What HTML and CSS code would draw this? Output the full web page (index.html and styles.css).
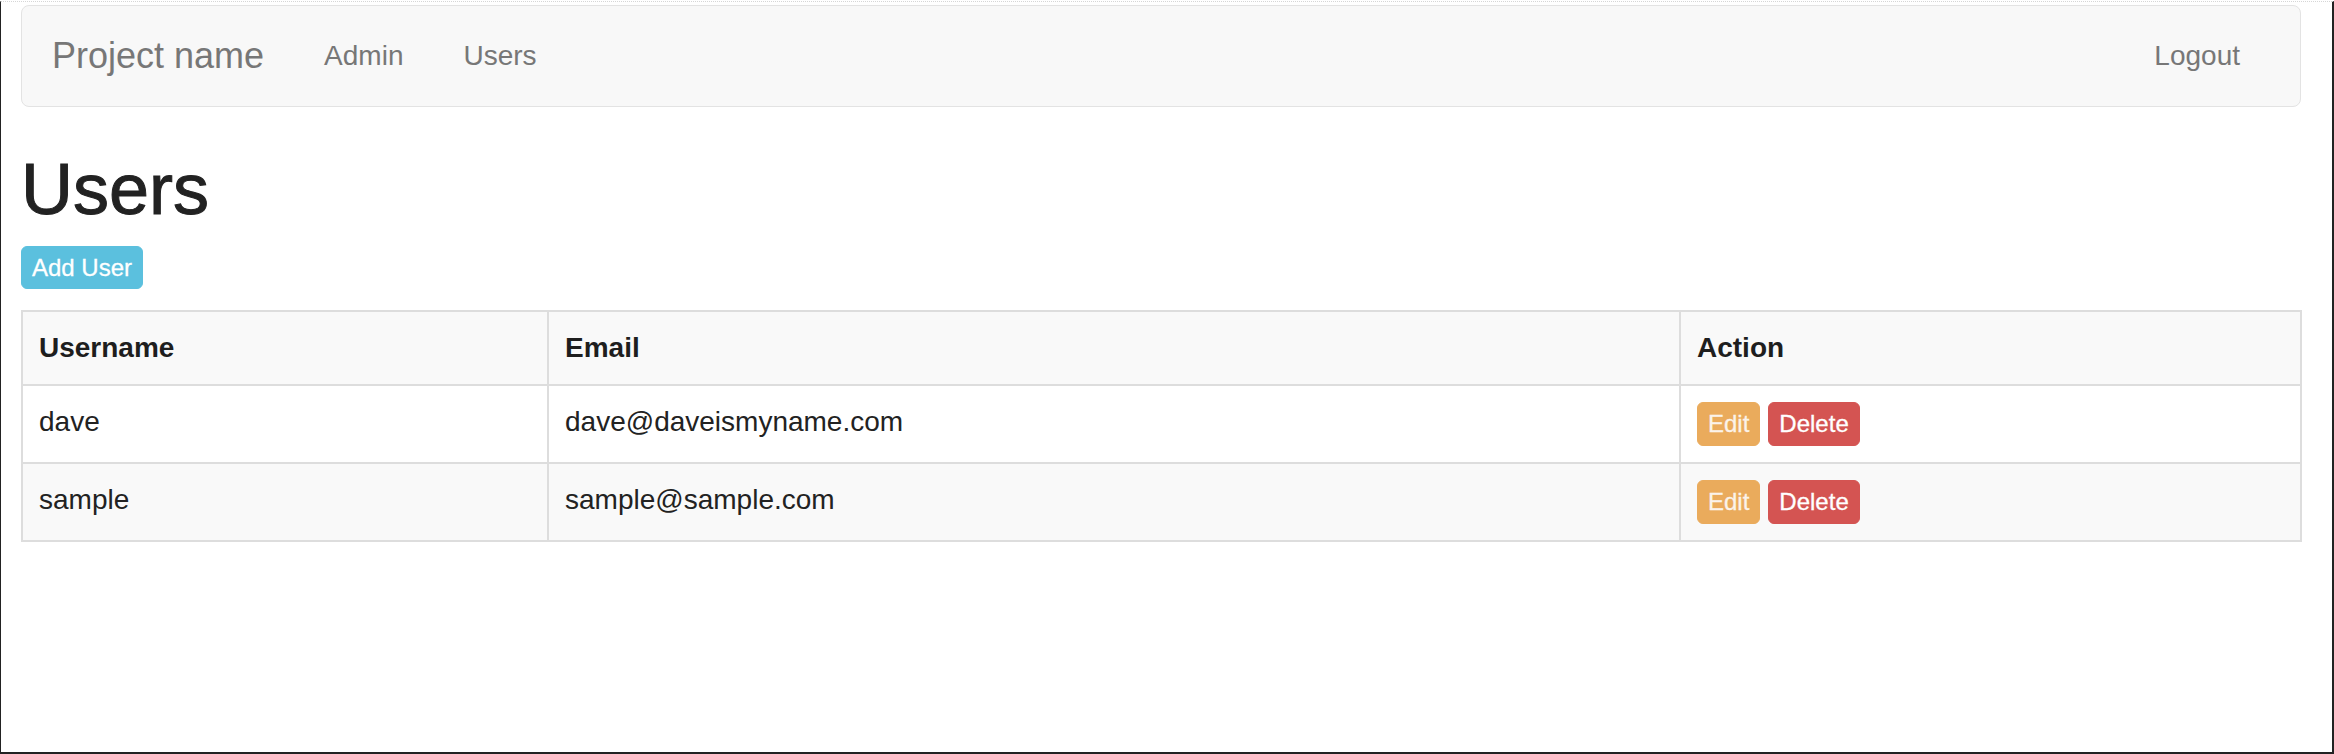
FILE: index.html
```html
<!DOCTYPE html>
<html lang="en">
<head>
<meta charset="utf-8">
<title>Users</title>
<link rel="stylesheet" href="styles.css">
</head>
<body>
<div class="frame">
  <nav class="navbar">
    <a class="brand" href="#">Project name</a>
    <ul class="nav">
      <li><a href="#">Admin</a></li>
      <li><a href="#">Users</a></li>
    </ul>
    <ul class="nav nav-right">
      <li><a href="#">Logout</a></li>
    </ul>
  </nav>

  <h1 class="title">Users</h1>
  <div class="toolbar">
    <a class="btn btn-info" href="#">Add User</a>
  </div>

  <table class="grid">
    <colgroup>
      <col class="col-user">
      <col class="col-email">
      <col class="col-action">
    </colgroup>
    <tbody>
      <tr class="head">
        <th><div class="cell cell-head">Username</div></th>
        <th><div class="cell cell-head">Email</div></th>
        <th><div class="cell cell-head">Action</div></th>
      </tr>
      <tr class="row-plain">
        <td><div class="cell">dave</div></td>
        <td><div class="cell">dave@daveismyname.com</div></td>
        <td><div class="cell actions"><a class="btn btn-warning" href="#">Edit</a><a class="btn btn-danger" href="#">Delete</a></div></td>
      </tr>
      <tr class="row-striped">
        <td><div class="cell">sample</div></td>
        <td><div class="cell">sample@sample.com</div></td>
        <td><div class="cell actions"><a class="btn btn-warning" href="#">Edit</a><a class="btn btn-danger" href="#">Delete</a></div></td>
      </tr>
    </tbody>
  </table>
</div>
</body>
</html>
```

FILE: styles.css
```css
html, body {
  margin: 0;
  padding: 0;
  background: #ffffff;
}

body {
  font-family: "Liberation Sans", Arial, Helvetica, sans-serif;
  color: #222222;
  font-size: 28px;
  line-height: 40px;
}

a {
  text-decoration: none;
}

.frame {
  box-sizing: border-box;
  margin-top: 1px;
  height: 753px;
  border-top: 1px dotted #d6d6d6;
  border-left: 1px solid #222222;
  border-right: 2px solid #222222;
  border-bottom: 2px solid #222222;
  padding: 3px 31px 0 20px;
}

/* Navbar */
.navbar {
  box-sizing: border-box;
  height: 102px;
  display: flex;
  align-items: flex-start;
  background: #f8f8f8;
  border: 1px solid #e3e3e3;
  border-radius: 8px;
  padding: 0 30px 0 0;
}

.brand {
  display: block;
  padding: 30px 30px;
  font-size: 36px;
  line-height: 40px;
  color: #777777;
}

.nav {
  display: flex;
  list-style: none;
  margin: 0;
  padding: 0;
}

.nav a {
  display: block;
  padding: 30px 30px;
  font-size: 28px;
  line-height: 40px;
  color: #777777;
}

.nav-right {
  margin-left: auto;
}

/* Heading */
.title {
  margin: 43px 0 0;
  font-size: 72px;
  line-height: 79px;
  font-weight: 500;
  color: #222222;
  -webkit-text-stroke: 1px #222222;
}

.toolbar {
  margin-top: 17px;
  display: flex;
}

/* Buttons */
.btn {
  display: inline-block;
  box-sizing: border-box;
  font-size: 24px;
  line-height: 36px;
  padding: 3px 10px 2px;
  border: 1px solid transparent;
  border-radius: 6px;
  color: #ffffff;
  white-space: nowrap;
  -webkit-text-stroke: 0.3px currentColor;
}

.btn-info {
  background: #5bc0de;
  border-color: #5bc0de;
}

.btn-warning {
  background: #eaab5c;
  border-color: #eaab5c;
  color: #fbf3ea;
}

.btn-danger {
  background: #d45452;
  border-color: #d45452;
}

/* Table */
.grid {
  margin-top: 21px;
  width: 2279px;
  table-layout: fixed;
  border-collapse: collapse;
  border: 2px solid #dddddd;
}

.col-user { width: 526px; }
.col-email { width: 1132px; }
.col-action { width: 621px; }

.grid th,
.grid td {
  padding: 0 16px;
  border: 2px solid #dddddd;
  text-align: left;
  vertical-align: top;
}

.grid th {
  font-weight: 700;
  color: #1e1e1e;
}

.head { background: #f9f9f9; }
.row-plain { background: #ffffff; }
.row-striped { background: #f9f9f9; }

.cell {
  box-sizing: border-box;
  height: 76px;
  padding-top: 16px;
  line-height: 40px;
}

.cell-head {
  height: 72px;
  padding-top: 16px;
}

.actions {
  display: flex;
  gap: 8px;
  padding-top: 16px;
}

.actions .btn {
  height: 44px;
  padding: 3px 10px 3px;
}
```
